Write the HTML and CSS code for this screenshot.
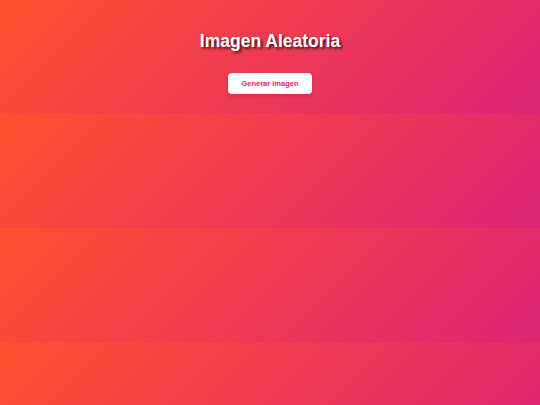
FILE: index.html
```html
<!DOCTYPE html>
<html lang="es">
<head>
<meta charset="utf-8">
<title>Imagen Aleatoria</title>
<link rel="stylesheet" href="styles.css">
</head>
<body>
  <main class="app">
    <h1 class="app-title">Imagen Aleatoria</h1>
    <button class="generate-btn" type="button">Generar imagen</button>
    <div class="image-slot"></div>
  </main>
</body>
</html>
```

FILE: styles.css
```css
body {
  margin: 0;
  padding: 31px 20px 20.33px;
  font-family: "Liberation Sans", Arial, sans-serif;
  background: linear-gradient(135deg, #ff512f, #dd2476);
}

.app {
  display: flex;
  flex-direction: column;
  align-items: center;
}

.app-title {
  margin: 0 0 22px;
  font-size: 17.5px;
  line-height: 20px;
  font-weight: 700;
  color: #ffffff;
  text-shadow: 2px 2px 3px rgba(0, 0, 0, 0.7);
}

.generate-btn {
  padding: 6px 13.5px;
  border: none;
  border-radius: 4px;
  background: #ffffff;
  color: #dd2476;
  font-family: inherit;
  font-size: 7.5px;
  line-height: 9px;
  font-weight: 700;
  cursor: pointer;
  box-shadow: 0 2px 4px rgba(0, 0, 0, 0.12);
}

.image-slot:empty {
  display: none;
}
```
